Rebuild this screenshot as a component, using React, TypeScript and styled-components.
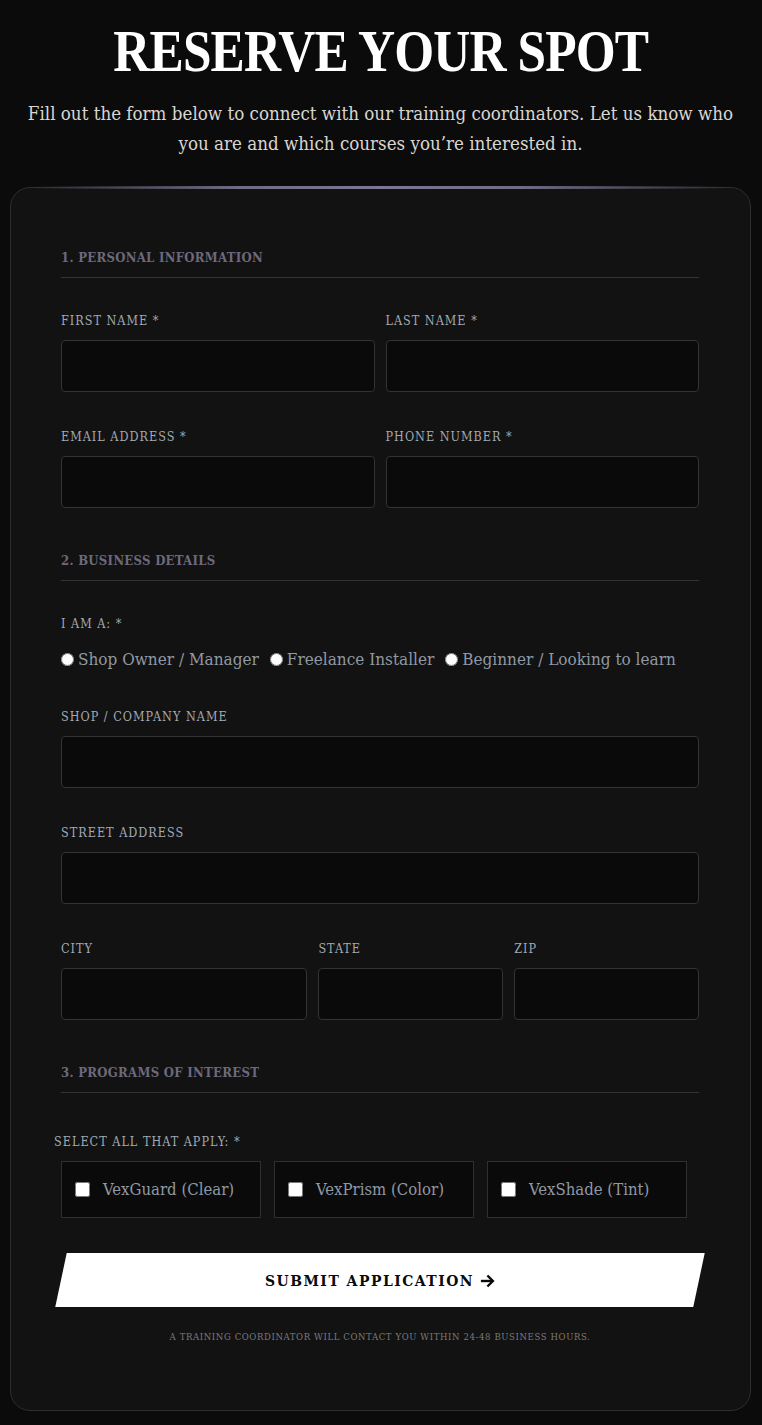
import styled, { createGlobalStyle } from "styled-components"

const GlobalStyle = createGlobalStyle`
  html, body {
    margin: 0;
    padding: 0;
    background: #0b0b0b;
  }
  body {
    font-family: "DejaVu Serif Condensed", "DejaVu Serif", "Liberation Serif", serif;
    color: #d6d6d6;
  }
  * {
    box-sizing: border-box;
  }
`

type FieldT = { label: string; required?: boolean }

const row1: FieldT[] = [
  { label: "First Name", required: true },
  { label: "Last Name", required: true },
]
const row2: FieldT[] = [
  { label: "Email Address", required: true },
  { label: "Phone Number", required: true },
]
const roles = ["Shop Owner / Manager", "Freelance Installer", "Beginner / Looking to learn"]
const programs = ["VexGuard (Clear)", "VexPrism (Color)", "VexShade (Tint)"]

const Field = ({ label, required }: FieldT) => (
  <Group>
    <Label>
      {label}
      {required && " *"}
    </Label>
    <Input type="text" />
  </Group>
)

const Arrow = () => (
  <svg width="15" height="14" viewBox="0 0 15 14" fill="none" stroke="currentColor" strokeWidth="2.4">
    <path d="M1 7h12" />
    <path d="M7.5 1.5 13 7l-5.5 5.5" />
  </svg>
)

const App = () => {
  return (
    <Page>
      <GlobalStyle />
      <Header>
        <Title>RESERVE YOUR SPOT</Title>
        <Intro>
          Fill out the form below to connect with our training coordinators. Let us know who
          you are and which courses you’re interested in.
        </Intro>
      </Header>

      <Card>
        <SectionTitle>1. Personal Information</SectionTitle>
        <TwoCols>
          {row1.map(f => <Field key={f.label} {...f} />)}
        </TwoCols>
        <TwoCols>
          {row2.map(f => <Field key={f.label} {...f} />)}
        </TwoCols>

        <SectionTitle>2. Business Details</SectionTitle>
        <Group>
          <Label>I am a: *</Label>
          <RadioRow>
            {roles.map(r => (
              <RadioOption key={r}>
                <input type="radio" name="role" />
                {r}
              </RadioOption>
            ))}
          </RadioRow>
        </Group>
        <Field label="Shop / Company Name" />
        <Field label="Street Address" />
        <AddressCols>
          <Field label="City" />
          <Field label="State" />
          <Field label="Zip" />
        </AddressCols>

        <SectionTitle>3. Programs of Interest</SectionTitle>
        <ProgramLabel>Select all that apply: *</ProgramLabel>
        <Programs>
          {programs.map(p => (
            <ProgramBox key={p}>
              <input type="checkbox" />
              <span>{p}</span>
            </ProgramBox>
          ))}
        </Programs>

        <Submit type="button">
          <span>
            SUBMIT APPLICATION <Arrow />
          </span>
        </Submit>
        <Note>A training coordinator will contact you within 24-48 business hours.</Note>
      </Card>
    </Page>
  )
}
export default App

const Page = styled.div`
  padding: 0 11px 15px 10px;
`

const Header = styled.header`
  text-align: center;
  padding: 18px 10px 0;
`

const Title = styled.h1`
  display: inline-block;
  margin: 0;
  font-family: "Liberation Serif", "Times New Roman", serif;
  font-weight: 700;
  font-size: 60px;
  line-height: 66px;
  letter-spacing: -1px;
  color: #fff;
  transform: scaleX(0.855);
`

const Intro = styled.p`
  margin: 15px 0 28px;
  font-size: 18.6px;
  line-height: 30px;
  color: #d9d6d2;
`

const Card = styled.form`
  position: relative;
  background: #121212;
  border: 1px solid #2e2e2e;
  border-radius: 20px;
  padding: 61px 51px 68px 50px;

  &::before {
    content: "";
    position: absolute;
    top: -2px;
    left: 20px;
    right: 20px;
    height: 3px;
    background: linear-gradient(
      90deg,
      rgba(122, 117, 144, 0) 0%,
      rgba(122, 117, 144, 0.9) 30%,
      #7c7792 50%,
      rgba(122, 117, 144, 0.9) 70%,
      rgba(122, 117, 144, 0) 100%
    );
  }
`

const SectionTitle = styled.h2`
  margin: 0 0 34px;
  padding-bottom: 10px;
  border-bottom: 1px solid #333;
  font-size: 13px;
  line-height: 18px;
  font-weight: 700;
  letter-spacing: 0.3px;
  text-transform: uppercase;
  color: #6d697c;

  & ~ & {
    margin-top: 8px;
  }
`

const Group = styled.div`
  display: flex;
  flex-direction: column;
  margin-bottom: 36px;
`

const Label = styled.label`
  font-size: 12.5px;
  line-height: 18px;
  letter-spacing: 1px;
  text-transform: uppercase;
  color: #a2aab2;
  margin-bottom: 10px;
`

const Input = styled.input`
  height: 52px;
  width: 100%;
  background: #0a0a0a;
  border: 1px solid #333;
  border-radius: 4px;
  color: #ddd;
  padding: 0 14px;
  font: inherit;
  &:focus {
    outline: none;
    border-color: #7c7792;
  }
`

const TwoCols = styled.div`
  display: grid;
  grid-template-columns: 1fr 1fr;
  column-gap: 11px;
`

const AddressCols = styled.div`
  display: grid;
  grid-template-columns: 4fr 3fr 3fr;
  column-gap: 11px;
`

const RadioRow = styled.div`
  display: flex;
  gap: 11px;
  padding-top: 3px;
`

const RadioOption = styled.label`
  display: flex;
  align-items: center;
  font-size: 17px;
  line-height: 26px;
  color: #8f99a3;

  input {
    margin: 0 4px 0 0;
    width: 13px;
    height: 13px;
  }
`

const ProgramLabel = styled.div`
  margin: 40px 0 10px -7px;
  font-size: 12.5px;
  line-height: 18px;
  letter-spacing: 1px;
  text-transform: uppercase;
  color: #a2aab2;
`

const Programs = styled.div`
  display: flex;
  flex-wrap: wrap;
  gap: 13px;
  margin-bottom: 35px;
`

const ProgramBox = styled.label`
  display: flex;
  align-items: center;
  width: 200px;
  height: 57px;
  padding: 0 13px;
  background: #0a0a0a;
  border: 1px solid #2f2f2f;
  font-size: 16.6px;
  color: #8f99a3;

  input {
    margin: 0 13px 0 0;
    width: 15px;
    height: 15px;
  }
`

const Submit = styled.button`
  display: block;
  width: 100%;
  height: 54px;
  border: none;
  background: #fff;
  cursor: pointer;
  transform: skewX(-12deg);

  span {
    display: inline-flex;
    align-items: center;
    gap: 6px;
    transform: skewX(12deg);
    font-family: "DejaVu Serif Condensed", "DejaVu Serif", serif;
    font-weight: 700;
    font-size: 15.5px;
    letter-spacing: 1.5px;
    color: #0a0a0a;
  }
`

const Note = styled.p`
  margin: 24px 0 0;
  text-align: center;
  font-size: 9.5px;
  letter-spacing: 0.6px;
  text-transform: uppercase;
  color: #7a7a7a;
`
